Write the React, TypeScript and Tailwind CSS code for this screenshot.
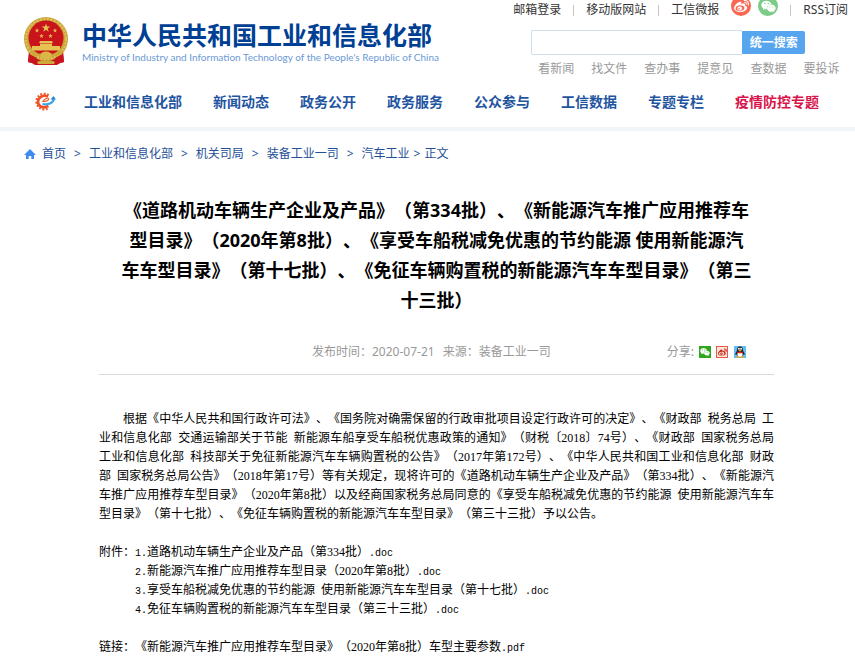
import React from 'react';
import { FaWeibo, FaWeixin } from 'react-icons/fa';

const NAV_ITEMS = ['工业和信息化部', '新闻动态', '政务公开', '政务服务', '公众参与', '工信数据', '专题专栏'];

const QUICK_LINKS = ['看新闻', '找文件', '查办事', '提意见', '查数据', '要投诉'];

const ATTACHMENTS = [
  { id: 1, name: '道路机动车辆生产企业及产品（第334批）' },
  { id: 2, name: '新能源汽车推广应用推荐车型目录（2020年第8批）' },
  { id: 3, name: '享受车船税减免优惠的节约能源\u2002使用新能源汽车车型目录（第十七批）' },
  { id: 4, name: '免征车辆购置税的新能源汽车车型目录（第三十三批）' },
];

const STAR = '0,-1 0.23,-0.31 0.95,-0.31 0.37,0.12 0.59,0.81 0,0.39 -0.59,0.81 -0.37,0.12 -0.95,-0.31 -0.23,-0.31';

const Emblem = () => (
  <svg viewBox="0 0 46 50" className="w-[46px] h-[50px] shrink-0" aria-hidden="true">
    <path d="M6 34 L5 46 L9 47 L12 49 L34 49 L37 47 L41 46 L40 34 Z" fill="#c8161d" />
    <circle cx="23" cy="23" r="22" fill="#cba53a" />
    <circle cx="23" cy="23" r="20" fill="none" stroke="#e0c25c" strokeWidth="2" strokeDasharray="2 1.5" />
    <circle cx="23" cy="22" r="17.5" fill="#c9141c" />
    <g fill="#e6c250">
      <polygon points={STAR} transform="translate(23 12) scale(4.6)" />
      <polygon points={STAR} transform="translate(14 14.5) scale(2.4)" />
      <polygon points={STAR} transform="translate(32 14.5) scale(2.4)" />
      <polygon points={STAR} transform="translate(18.5 20) scale(2.4)" />
      <polygon points={STAR} transform="translate(27.5 20) scale(2.4)" />
      <path d="M17 25 H29 L30 27 H16 Z M17 27.5 H29 V30 H37 V34.5 H9 V30 H17 Z" />
    </g>
    <path d="M7 35 Q15 40 23 36 Q31 40 39 35 L39 39 Q31 41 28 38 L18 38 Q13 42 7 39 Z" fill="#cfa83a" />
    <path d="M17 40 A6 4.5 0 0 1 29 40 L27 42 H19 Z" fill="#dcb748" />
    <path d="M6 38 L14 42 L12 48 L5 46 Z M40 38 L32 42 L34 48 L41 46 Z" fill="#c8161d" />
    <path d="M14 46 Q19 43 23 45 Q27 43 32 46 L31 48 H15 Z" fill="#cfa83a" />
  </svg>
);

const GearLogo = () => (
  <svg viewBox="0 0 22 19" className="w-[22px] h-[19px]" aria-hidden="true">
    <path d="M14.6 3.2 A7.7 7.7 0 1 0 15 15.6" fill="none" stroke="#ee5a2c" strokeWidth="2.4" strokeDasharray="1.8 1.5" />
    <path d="M14 4.6 C9.6 2.4 4 5 4 9.8 C4 14.8 9.6 16.6 14.4 13.8" fill="none" stroke="#ee4f27" strokeWidth="2.6" />
    <path d="M9 9.4 C12 9.6 14.8 8.4 14.6 6.8 C14.2 5.4 11 6 9 9.4 Z" fill="#fff" stroke="#f26a3a" strokeWidth="1.4" />
    <path d="M8.5 12 C13.5 13.2 19.4 11.4 19.8 6.6" fill="none" stroke="#3aa5e4" strokeWidth="2.2" />
    <path d="M16.4 7.4 L19.6 4 L21.8 7.6 Z" fill="#2387d6" />
  </svg>
);

const QqIcon = () => (
  <svg viewBox="0 0 12 12" className="w-3 h-3" aria-hidden="true">
    <rect width="12" height="12" fill="#62bdf0" />
    <path d="M6 0.5 C3.4 0.5 3 2.6 3 4.6 L1.2 8 L2 9 L3 8.4 V10.5 H9 V8.4 L10 9 L10.8 8 L9 4.6 C9 2.6 8.6 0.5 6 0.5 Z" fill="#22222a" />
    <ellipse cx="6" cy="8.4" rx="2.6" ry="2.6" fill="#fff" />
    <ellipse cx="4.9" cy="2.8" rx="0.9" ry="1.1" fill="#fff" />
    <ellipse cx="7.1" cy="2.8" rx="0.9" ry="1.1" fill="#fff" />
    <path d="M3.2 5.4 Q6 6.8 8.8 5.4 L8.8 6.8 Q6 7.8 3.2 6.8 Z" fill="#e2231a" />
    <path d="M4.2 4 H7.8 L6 5.4 Z M2.4 10.2 H5.6 V11.8 H2.4 Z M6.4 10.2 H9.6 V11.8 H6.4 Z" fill="#f6a623" />
  </svg>
);

const Separator = () => <span className="w-px h-[11px] bg-[#cfc4c4]" />;

const Ext = ({ children }: { children: React.ReactNode }) => (
  <span className="font-['Liberation_Mono'] text-[10px]">{children}</span>
);

const Header = () => (
  <header>
    <div className="flex justify-between pl-[23px] pr-[7px]">
      <div className="flex items-start pt-4">
        <Emblem />
        <div className="pl-[13px] pt-[3px]">
          <div className="text-[25px] leading-[32px] font-bold text-[#004094] whitespace-nowrap">中华人民共和国工业和信息化部</div>
          <div className="font-['Lato'] text-[10px] leading-[12px] text-[#6c9ad6] whitespace-nowrap">
            Ministry of Industry and Information Technology of the People's Republic of China
          </div>
        </div>
      </div>

      <div className="shrink-0">
        <div className="h-5 flex items-center gap-3 text-xs text-[#333] whitespace-nowrap">
          <a href="#">邮箱登录</a>
          <Separator />
          <a href="#">移动版网站</a>
          <Separator />
          <a href="#">工信微报</a>
          <span className="flex gap-[7px] -mt-2">
            <a href="#" aria-label="微博" className="w-5 h-5 rounded-full bg-[#f96854] text-white flex items-center justify-center">
              <FaWeibo size={15} />
            </a>
            <a href="#" aria-label="微信" className="w-5 h-5 rounded-full bg-[#7ccb87] text-white flex items-center justify-center">
              <FaWeixin size={15} />
            </a>
          </span>
          <Separator />
          <a href="#">RSS订阅</a>
        </div>
        <form className="mt-[10px] ml-[18px] flex items-center" onSubmit={(e) => e.preventDefault()}>
          <input type="text" aria-label="搜索" className="w-[211px] h-[25px] px-2 text-xs border border-[#cfe0ec] border-r-0 rounded-l-xs outline-none" />
          <button type="submit" className="w-[63px] h-[23px] bg-[#56a5ee] text-white text-xs font-bold rounded-r-xs">统一搜索</button>
        </form>
        <div className="mt-[5px] ml-[25px] flex gap-[17px] text-xs leading-[18px] text-[#999]">
          {QUICK_LINKS.map((item) => (
            <a key={item} href="#">{item}</a>
          ))}
        </div>
      </div>
    </div>

    <nav className="h-[53px] flex items-center pl-[34px] pb-0.5 border-b-4 border-[#eff5f8]">
      <GearLogo />
      <div className="flex gap-[31px] pl-7 text-sm font-bold text-[#1f559f] whitespace-nowrap">
        {NAV_ITEMS.map((item) => (
          <a key={item} href="#">{item}</a>
        ))}
        <a href="#" className="text-[#d9144b]">疫情防控专题</a>
      </div>
    </nav>
  </header>
);

const Breadcrumb = () => (
  <div className="flex items-center gap-2 pl-6 pt-[14px] text-xs leading-[18px] text-[#1e4f97]">
    <svg viewBox="0 0 12 10" className="w-3 h-[10px] -mr-0.5" aria-hidden="true">
      <path d="M6 0 L12 6 H10 V10 H7.3 V7 H4.7 V10 H2 V6 H0 Z" fill="#3d8df0" />
    </svg>
    <a href="#">首页</a>
    <span>&gt;</span>
    <a href="#">工业和信息化部</a>
    <span>&gt;</span>
    <a href="#">机关司局</a>
    <span>&gt;</span>
    <a href="#">装备工业一司</a>
    <span>&gt;</span>
    <span className="flex gap-1">
      <a href="#">汽车工业</a>
      <span>&gt;</span>
      <span>正文</span>
    </span>
  </div>
);

export default function App() {
  return (
    <div className="bg-white text-black [text-spacing-trim:space-all] font-['Noto_Sans','Noto_Sans_CJK_SC',sans-serif]">
      <Header />
      <Breadcrumb />

      <main className="pl-[99px] pr-[81px] pt-8 pb-4">
        <h1 className="px-[22px] text-lg leading-[30px] font-bold text-center">
          《道路机动车辆生产企业及产品》（第334批）、《新能源汽车推广应用推荐车型目录》（2020年第8批）、《享受车船税减免优惠的节约能源 使用新能源汽车车型目录》（第十七批）、《免征车辆购置税的新能源汽车车型目录》（第三十三批）
        </h1>

        <div className="flex justify-between items-center mt-7 pl-[213px] pr-7 pb-[13px] text-xs leading-[18px] text-[#999] border-b border-[#d9d9d9]">
          <div className="flex gap-2">
            <span>发布时间：2020-07-21</span>
            <span>来源：装备工业一司</span>
          </div>
          <div className="flex items-center gap-[5px]">
            <span>分享:</span>
            <button aria-label="分享到微信" className="w-3 h-3 bg-[#2fa61d] text-white flex items-center justify-center">
              <FaWeixin size={10} />
            </button>
            <button aria-label="分享到微博" className="w-3 h-3 bg-[#fbe9d8] border border-[#e8574b] text-[#c9201c] flex items-center justify-center">
              <FaWeibo size={9} />
            </button>
            <button aria-label="分享到QQ" className="ml-px">
              <QqIcon />
            </button>
          </div>
        </div>

        <article className="pt-[35px] text-xs leading-[19px] font-['Liberation_Serif','Noto_Sans_CJK_SC',serif]">
          <p className="indent-6 text-justify">
            根据《中华人民共和国行政许可法》、《国务院对确需保留的行政审批项目设定行政许可的决定》、《财政部&ensp;税务总局&ensp;工业和信息化部&ensp;交通运输部关于节能&ensp;新能源车船享受车船税优惠政策的通知》（财税〔2018〕74号）、《财政部&ensp;国家税务总局 工业和信息化部&ensp;科技部关于免征新能源汽车车辆购置税的公告》（2017年第172号）、《中华人民共和国工业和信息化部&ensp;财政部&ensp;国家税务总局公告》（2018年第17号）等有关规定，现将许可的《道路机动车辆生产企业及产品》（第334批）、《新能源汽车推广应用推荐车型目录》（2020年第8批）以及经商国家税务总局同意的《享受车船税减免优惠的节约能源&ensp;使用新能源汽车车型目录》（第十七批）、《免征车辆购置税的新能源汽车车型目录》（第三十三批）予以公告。
          </p>

          <div className="flex mt-[19px]">
            <span className="w-9 shrink-0">附件：</span>
            <ul>
              {ATTACHMENTS.map((file) => (
                <li key={file.id} className="h-[19px]">
                  <a href="#"><Ext>{file.id}.</Ext>{file.name}<Ext>.doc</Ext></a>
                </li>
              ))}
            </ul>
          </div>

          <div className="flex mt-[19px] h-[19px]">
            <span className="w-9 shrink-0">链接：</span>
            <a href="#">《新能源汽车推广应用推荐车型目录》（2020年第8批）车型主要参数<Ext>.pdf</Ext></a>
          </div>
        </article>
      </main>
    </div>
  );
}
